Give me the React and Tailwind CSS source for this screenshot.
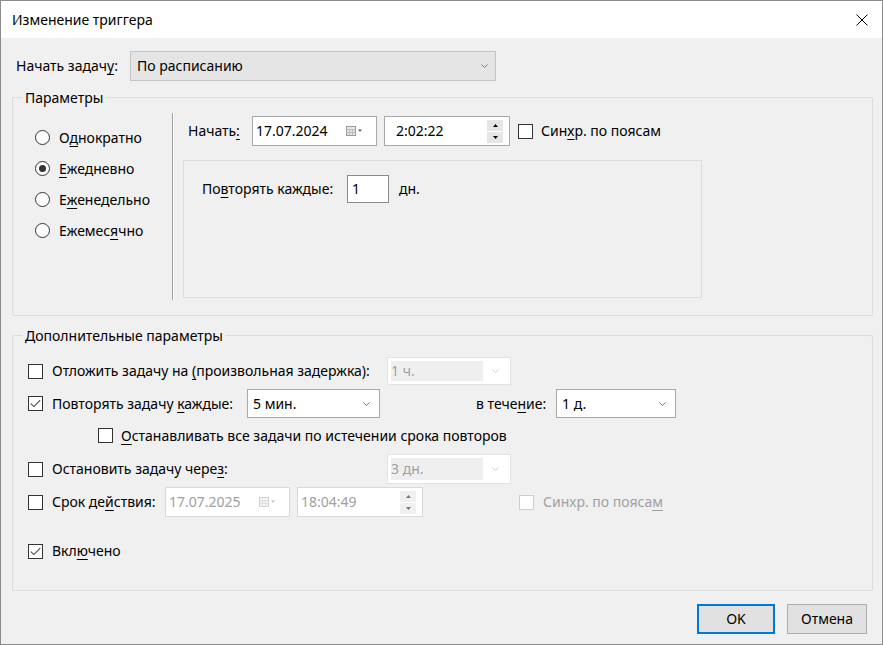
const U = ({ children }) => (
  <span className="underline decoration-1 underline-offset-[3px]">{children}</span>
);

const Chevron = ({ color = "#7a7a7a" }) => (
  <svg width="7" height="4" viewBox="0 0 7 4">
    <path d="M0.5 0.5 3.5 3.5 6.5 0.5" fill="none" stroke={color} strokeWidth="1" />
  </svg>
);

const Check = ({ checked, disabled }) => (
  <span
    className={`flex h-[15px] w-[15px] shrink-0 items-center justify-center border bg-white ${
      disabled ? "border-[#cccccc]" : "border-[#333333]"
    }`}
  >
    {checked && (
      <svg width="11" height="9" viewBox="0 0 11 9">
        <path d="M0.8 4.6 3.9 7.6 10.2 1.2" fill="none" stroke="#444444" strokeWidth="1.1" />
      </svg>
    )}
  </span>
);

const Radio = ({ checked, label }) => (
  <div className="flex h-[31px] items-center gap-[9px]">
    <span className="flex h-[15px] w-[15px] items-center justify-center rounded-full border border-[#333333] bg-white">
      {checked && <span className="h-[7px] w-[7px] rounded-full bg-[#333333]" />}
    </span>
    <span>{label}</span>
  </div>
);

const CalendarIcon = ({ disabled }) => (
  <svg width="17" height="10" viewBox="0 0 17 10">
    <rect x="0.5" y="0.5" width="9" height="9" fill={disabled ? "#f4f4f4" : "#e6e6e6"} stroke={disabled ? "#d0d0d0" : "#9a9a9a"} />
    <path d="M0.5 3.5h9M0.5 6.5h9M3.5 3.5v6M6.5 3.5v6" stroke={disabled ? "#e0e0e0" : "#bcbcbc"} />
    <path d="M12 3.5h4l-2 2.2z" fill={disabled ? "#bbbbbb" : "#555555"} />
  </svg>
);

const Spinner = ({ disabled }) => (
  <div className="flex flex-col gap-[1px]">
    {["M0 3h5L2.5 0z", "M0 0h5L2.5 3z"].map((d) => (
      <span
        key={d}
        className={`flex h-[11px] w-[16px] items-center justify-center ${disabled ? "bg-[#f0f0f0]" : "bg-[#e6e6e6]"}`}
      >
        <svg width="5" height="3" viewBox="0 0 5 3">
          <path d={d} fill={disabled ? "#777777" : "#000000"} />
        </svg>
      </span>
    ))}
  </div>
);

const DateBox = ({ value, disabled }) => (
  <div
    className={`flex h-full w-[125px] items-center justify-between border bg-white pl-[3px] pr-[13px] ${
      disabled ? "border-[#d9d9d9] text-[#a0a0a0]" : "border-[#a8a8a8]"
    }`}
  >
    <span>{value}</span>
    <CalendarIcon disabled={disabled} />
  </div>
);

const TimeBox = ({ value, disabled, pl }) => (
  <div
    className={`flex h-full w-[126px] items-center justify-between border bg-white pr-[6px] ${pl} ${
      disabled ? "border-[#d9d9d9] text-[#a0a0a0]" : "border-[#a8a8a8]"
    }`}
  >
    <span>{value}</span>
    <Spinner disabled={disabled} />
  </div>
);

const Combo = ({ value, width }) => (
  <div className={`flex h-full items-center justify-between border border-[#a8a8a8] bg-white pl-[5px] pr-[9px] ${width}`}>
    <span>{value}</span>
    <Chevron />
  </div>
);

const DisabledCombo = ({ value }) => (
  <div className="flex h-full w-[124px] items-stretch border border-[#e3e3e3] bg-white p-[3px]">
    <div className="flex flex-1 items-center bg-[#efefef] text-[#a0a0a0]">{value}</div>
    <div className="flex w-[24px] items-center justify-center">
      <Chevron color="#cccccc" />
    </div>
  </div>
);

const Group = ({ title, className, children }) => (
  <div className={`relative rounded-[2px] border border-[#dcdcdc] ${className}`}>
    <span className="absolute left-[9px] -top-[10px] bg-[#f0f0f0] px-[3px] leading-[20px]">{title}</span>
    {children}
  </div>
);

export default function App() {
  return (
    <div className="flex h-[645px] w-[883px] flex-col border border-[#8c8c8c] bg-[#f0f0f0] font-['Noto_Sans',sans-serif] text-[14px] leading-[20px] text-black">
      <div className="flex h-[37px] shrink-0 items-center justify-between bg-white pl-[11px] pr-[14px]">
        <span>Изменение триггера</span>
        <svg width="12" height="12" viewBox="0 0 12 12">
          <path d="M0.5 0.5 11.5 11.5M11.5 0.5 0.5 11.5" stroke="#000000" strokeWidth="1" />
        </svg>
      </div>

      <div className="flex flex-col pl-[11px] pr-[9px]">
        <div className="mt-[13px] flex h-[30px] items-center">
          <span className="w-[118px] pl-[4px]">
            Начать задач<U>у</U>:
          </span>
          <div className="flex h-full w-[366px] items-center justify-between border border-[#c4c4c4] bg-[#e5e5e5] pl-[6px] pr-[7px]">
            <span>По расписанию</span>
            <Chevron />
          </div>
        </div>

        <Group title="Параметры" className="mt-[16px] flex h-[219px]">
          <div className="w-[159px] shrink-0 pl-[22px] pt-[24px]">
            <Radio label={<>О<U>д</U>нократно</>} />
            <Radio checked label={<><U>Е</U>жедневно</>} />
            <Radio label={<>Е<U>ж</U>енедельно</>} />
            <Radio label={<>Ежемес<U>я</U>чно</>} />
          </div>
          <div className="mt-[15px] h-[187px] w-[2px] shrink-0 border-l border-r border-l-[#a0a0a0] border-r-white" />
          <div className="flex flex-col pl-[9px] pt-[18px]">
            <div className="flex h-[30px] items-center pl-[5px]">
              <span className="w-[64px]">
                Начать<U>:</U>
              </span>
              <DateBox value="17.07.2024" />
              <div className="ml-[7px] h-full">
                <TimeBox value="2:02:22" pl="pl-[11px]" />
              </div>
              <div className="ml-[8px] flex items-center gap-[8px]">
                <Check />
                <span>
                  Син<U>х</U>р. по поясам
                </span>
              </div>
            </div>
            <div className="mt-[14px] h-[138px] w-[519px] border border-[#dcdcdc] pl-[18px] pt-[14px]">
              <div className="flex h-[28px] items-center">
                <span className="w-[145px]">
                  По<U>в</U>торять каждые:
                </span>
                <div className="flex h-full w-[42px] items-center border border-[#8a8a8a] bg-white pl-[4px]">1</div>
                <span className="ml-[10px]">дн.</span>
              </div>
            </div>
          </div>
        </Group>

        <Group title="Дополнительные параметры" className="mt-[19px] flex h-[256px] flex-col pl-[15px] pt-[21px]">
          <div className="flex h-[28px] items-center">
            <Check />
            <span className="ml-[9px] w-[335px]">
              Отложить задачу на <U>(</U>произвольная задержка):
            </span>
            <DisabledCombo value="1 ч." />
          </div>

          <div className="mt-[4px] flex h-[29px] items-center">
            <Check checked />
            <span className="ml-[9px] w-[195px]">
              Повторять задачу <U>к</U>аждые:
            </span>
            <Combo value="5 мин." width="w-[133px]" />
            <span className="ml-[96px] w-[80px]">
              в тече<U>н</U>ие:
            </span>
            <Combo value="1 д." width="w-[120px]" />
          </div>

          <div className="mt-[2px] flex h-[31px] items-center pl-[70px]">
            <Check />
            <span className="ml-[8px]">
              <U>О</U>станавливать все задачи по истечении срока повторов
            </span>
          </div>

          <div className="mt-[3px] flex h-[30px] items-center">
            <Check />
            <span className="ml-[9px] w-[335px]">
              Остановить задачу чере<U>з</U>:
            </span>
            <DisabledCombo value="3 дн." />
          </div>

          <div className="mt-[3px] flex h-[30px] items-center">
            <Check />
            <span className="ml-[9px] w-[113px]">
              Срок де<U>й</U>ствия:
            </span>
            <DateBox value="17.07.2025" disabled />
            <div className="ml-[7px] h-full">
              <TimeBox value="18:04:49" disabled pl="pl-[3px]" />
            </div>
            <div className="ml-[96px] flex items-center gap-[9px] text-[#a0a0a0]">
              <Check disabled />
              <span>
                Синхр. по пояса<U>м</U>
              </span>
            </div>
          </div>

          <div className="mt-[19px] flex h-[30px] items-center">
            <Check checked />
            <span className="ml-[9px]">
              Вкл<U>ю</U>чено
            </span>
          </div>
        </Group>

        <div className="mt-[13px] flex justify-end gap-[12px] pr-[6px]">
          <button className="flex h-[30px] w-[78px] items-center justify-center border-2 border-[#0078d7] bg-[#e1e1e1]">
            OK
          </button>
          <button className="flex h-[30px] w-[80px] items-center justify-center border border-[#adadad] bg-[#e1e1e1]">
            Отмена
          </button>
        </div>
      </div>
    </div>
  );
}
